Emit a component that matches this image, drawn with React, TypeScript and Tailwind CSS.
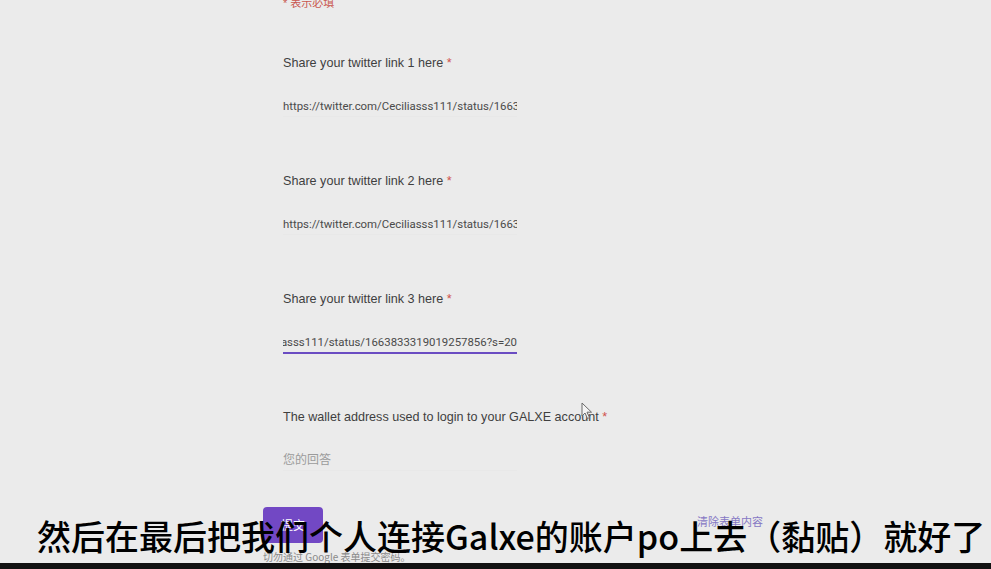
import React from 'react'

interface Question {
    label: string,
    value?: string,
    focused?: boolean
}

const link = "https://twitter.com/Ceciliasss111/status/1663833319019257856?s=20"

const questions: Question[] = [
    { label: "Share your twitter link 1 here", value: link },
    { label: "Share your twitter link 2 here", value: link },
    { label: "Share your twitter link 3 here", value: link, focused: true },
]

const labelFont = { fontFamily: '"Liberation Sans", Arial, sans-serif' }
const cjkFont = { fontFamily: '"Noto Sans CJK SC", sans-serif' }

const App: React.FC = () => {

    // one question block: label + answer line
    const renderQuestion = (q: Question, idx: number) => (
        <div key={idx} className="h-[118px]">
            <div className="text-[12.6px] leading-[20px] text-[#3f3f3f]" style={labelFont}>
                {q.label} <span className="text-[#d0524b]">*</span>
            </div>
            <div
                className={
                    q.focused
                        ? "mt-[23px] w-[234px] h-[22px] overflow-hidden flex justify-end border-b-2 border-[#6a4cc2]"
                        : "mt-[23px] w-[234px] h-[21px] overflow-hidden flex justify-start border-b border-[#e8e8e8]"
                }
            >
                <span
                    className="whitespace-nowrap text-[11.4px] leading-[20px] text-[#4a4a4a]"
                    style={{ fontFamily: 'Roboto, "Liberation Sans", sans-serif' }}
                >
                    {q.value}
                </span>
            </div>
        </div>
    )

    return (
        <div className="w-full h-[569px] flex flex-col bg-[#111111] overflow-hidden">
            <div className="relative h-[563px] bg-[#ebebeb] overflow-hidden">
                <div className="pl-[263px]">
                    <div className="pl-[20px]">
                        {/* required note, cut off by the top edge */}
                        <div
                            className="-mt-[4px] text-[11px] leading-[14px] text-[#c9574f]"
                            style={{ fontFamily: '"Liberation Sans", "Noto Sans CJK SC", sans-serif' }}
                        >
                            * 表示必填
                        </div>

                        <div className="mt-[43px]">
                            {questions.map(renderQuestion)}

                            <div>
                                <div className="text-[12.6px] leading-[20px] text-[#3f3f3f]" style={labelFont}>
                                    The wallet address used to login to your GALXE account <span className="text-[#d0524b]">*</span>
                                </div>
                                <div className="mt-[23px] w-[234px] h-[21px] border-b border-[#e8e8e8]">
                                    <div className="pt-[2px] text-[12px] leading-[14px] text-[#9b9b9b]" style={cjkFont}>
                                        您的回答
                                    </div>
                                </div>
                            </div>
                        </div>
                    </div>

                    {/* submit row */}
                    <div className="mt-[36px] w-[500px] flex justify-between items-start">
                        <button className="w-[60px] h-[36px] rounded-[4px] bg-[#7248c4] text-white text-[12px]" style={cjkFont}>
                            提交
                        </button>
                        <span className="mt-[6px] text-[11px] leading-[16px] text-[#8678c4]" style={cjkFont}>
                            清除表单内容
                        </span>
                    </div>
                    <div className="mt-[8px] text-[10px] leading-[12px] text-[#8a8a8a]" style={cjkFont}>
                        切勿通过 Google 表单提交密码。
                    </div>
                </div>

                {/* mouse cursor */}
                <svg className="absolute left-[581px] top-[402px]" width="12" height="18" viewBox="0 0 12 18">
                    <path d="M1 1 L1 14 L4 11 L6.5 16.5 L8.5 15.5 L6 10.2 L10.5 10.2 Z" fill="#f4f4f4" stroke="#6a6a6a" strokeWidth="1" strokeLinejoin="round" />
                </svg>

                {/* video subtitle */}
                <div
                    className="absolute left-[37px] top-[514px] text-[34px] leading-[44px] font-medium text-black whitespace-nowrap"
                    style={cjkFont}
                >
                    然后在最后把我们个人连接Galxe的账户po上去（黏贴）就好了
                </div>
            </div>
            <div className="h-[6px] bg-[#111111]" />
        </div>
    )
}

export default App
